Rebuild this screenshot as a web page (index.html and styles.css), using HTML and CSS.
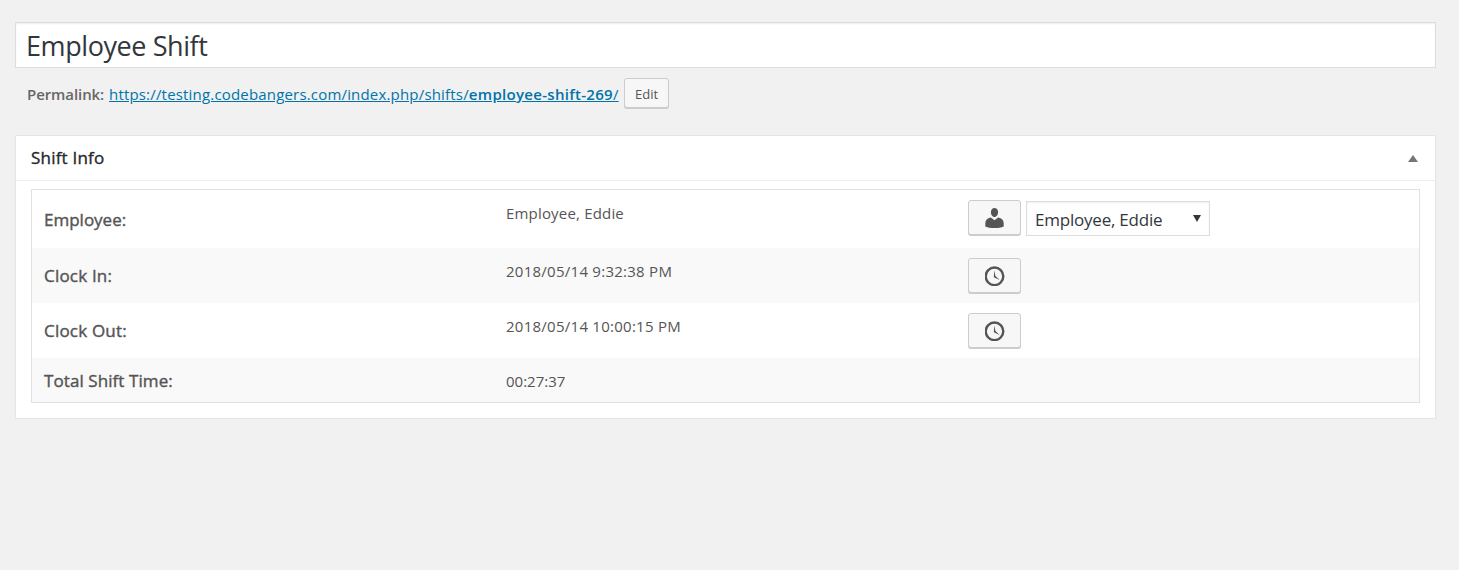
FILE: index.html
```
<!DOCTYPE html>
<html lang="en">
<head>
<meta charset="utf-8">
<title>Employee Shift</title>
<link rel="stylesheet" href="styles.css">
</head>
<body>
<main class="editor">
  <div class="title-field"><span class="title-text">Employee Shift</span></div>
  <div class="permalink">
    <span class="permalink-label">Permalink:</span>
    <a class="permalink-url"><span class="url-base">https://testing.codebangers.com/index.php/shifts/</span><span class="url-slug">employee-shift-269</span><span class="url-end">/</span></a>
    <span class="button edit-button">Edit</span>
  </div>
  <section class="panel">
    <header class="panel-header">
      <h2 class="panel-title">Shift Info</h2>
      <svg class="toggle" width="10" height="7" viewBox="0 0 10 7"><path d="M5 0 10 7H0z"/></svg>
    </header>
    <div class="table">
      <div class="row row-employee">
        <div class="label">Employee:</div>
        <div class="value name-value">Employee, Eddie</div>
        <div class="actions">
          <span class="button icon-button"><svg width="20" height="20" viewBox="0 0 20 20"><path d="M9.500 0c2.200 0 3.600 1.700 3.600 4 0 2.600-1.400 5-3.600 5S5.900 6.600 5.900 4c0-2.300 1.400-4 3.600-4zM5.800 9.500l3.700 2.700 3.700-2.700c3.600.5 5.500 3 5.500 6v3c-2.500 1.100-5.500 1.500-9.200 1.500S2.800 19.600.3 18.500v-3c0-3 1.900-5.500 5.500-6z"/></svg></span>
          <span class="select"><span class="select-text">Employee, Eddie</span><svg class="caret" width="8" height="7" viewBox="0 0 8 7"><path d="M0 0h8L4 7z"/></svg></span>
        </div>
      </div>
      <div class="row">
        <div class="label label-clock">Clock In:</div>
        <div class="value date-value">2018/05/14 9:32:38 PM</div>
        <div class="actions"><span class="button icon-button"><svg width="20" height="20" viewBox="0 0 20 20"><circle class="dial" cx="9.500" cy="10.300" r="8.800"/><path d="M9.300 4.200l1.100 5.900 4.300 4-5.900-2.900z"/></svg></span></div>
      </div>
      <div class="row">
        <div class="label label-clock">Clock Out:</div>
        <div class="value date-value">2018/05/14 10:00:15 PM</div>
        <div class="actions"><span class="button icon-button"><svg width="20" height="20" viewBox="0 0 20 20"><circle class="dial" cx="9.500" cy="10.300" r="8.800"/><path d="M9.300 4.200l1.100 5.900 4.300 4-5.900-2.900z"/></svg></span></div>
      </div>
      <div class="row row-total">
        <div class="label label-total">Total Shift Time:</div>
        <div class="value">00:27:37</div>
        <div class="actions"></div>
      </div>
    </div>
  </section>
</main>
</body>
</html>
```

FILE: styles.css
```
* { box-sizing: border-box; }
body {
  margin: 0;
  background: #f1f1f1;
  color: #555;
  font-family: "Open Sans", "Noto Sans", sans-serif;
  white-space: nowrap;
}
.editor { padding: 22px 23px 0 15px; }
.title-field {
  height: 46px;
  padding-left: 10px;
  border: 1px solid #ddd;
  background: #fff;
  box-shadow: inset 0 1px 2px rgba(0,0,0,.07);
  color: #32373c;
  font-size: 27px;
  line-height: 45px;
}
.title-text { letter-spacing: -.42px; }
.permalink {
  display: flex;
  height: 67px;
  padding: 10px 0 0 12px;
  font-size: 15px;
  line-height: 33px;
  color: #666;
}
.permalink-label { width: 82px; font-weight: 600; letter-spacing: -.08px; }
.permalink-url { width: 515px; color: #0073aa; text-decoration: underline; letter-spacing: .18px; }
.url-slug { font-weight: 600; letter-spacing: .3px; }
.button {
  display: block;
  border: 1px solid #ccc;
  border-radius: 3px;
  background: #f7f7f7;
  box-shadow: 0 1px 0 #ccc;
  color: #555;
  text-align: center;
}
.edit-button { width: 45px; height: 30px; font-size: 13px; line-height: 31px; }
.panel {
  height: 284px;
  border: 1px solid #e5e5e5;
  background: #fff;
  box-shadow: 0 1px 1px rgba(0,0,0,.04);
}
.panel-header {
  display: flex;
  justify-content: space-between;
  align-items: center;
  height: 45px;
  padding: 0 17px 0 15px;
  border-bottom: 1px solid #eee;
}
.panel-title {
  margin: 0;
  color: #23282d;
  font-size: 17px;
  font-weight: 400;
  line-height: 44px;
  letter-spacing: .2px;
  -webkit-text-stroke: .35px #23282d;
}
.toggle { fill: #72777c; }
.table { margin: 8px 15px 0; border: 1px solid #e1e1e1; }
.row { display: grid; grid-template-columns: 462px 462px 1fr; height: 55px; padding-left: 12px; }
.row:nth-child(even) { background: #f9f9f9; }
.row-employee { height: 58px; }
.row-total { height: 44px; }
.label { font-size: 17px; line-height: 55px; -webkit-text-stroke: .4px #555; }
.label-clock { letter-spacing: .2px; }
.label-total { letter-spacing: .08px; }
.row-employee .label { line-height: 60px; }
.row-total .label { line-height: 45px; }
.value { font-size: 15px; line-height: 47px; }
.name-value { letter-spacing: .18px; }
.date-value { letter-spacing: .26px; }
.actions { display: flex; gap: 5px; padding-top: 10px; }
.icon-button { width: 53px; height: 35px; padding-top: 7px; }
.icon-button svg { display: block; margin: 0 auto; fill: #555; }
.dial { fill: none; stroke: #555; stroke-width: 2.4; }
.select {
  display: flex;
  justify-content: space-between;
  width: 184px;
  height: 35px;
  margin-top: 1px;
  padding: 0 8px 0 8px;
  border: 1px solid #ddd;
  background: #fff;
  box-shadow: inset 0 1px 2px rgba(0,0,0,.07);
  color: #32373c;
  font-size: 17px;
  line-height: 36px;
}
.select-text { letter-spacing: -.22px; }
.caret { margin-top: 13px; fill: #32373c; }
```
